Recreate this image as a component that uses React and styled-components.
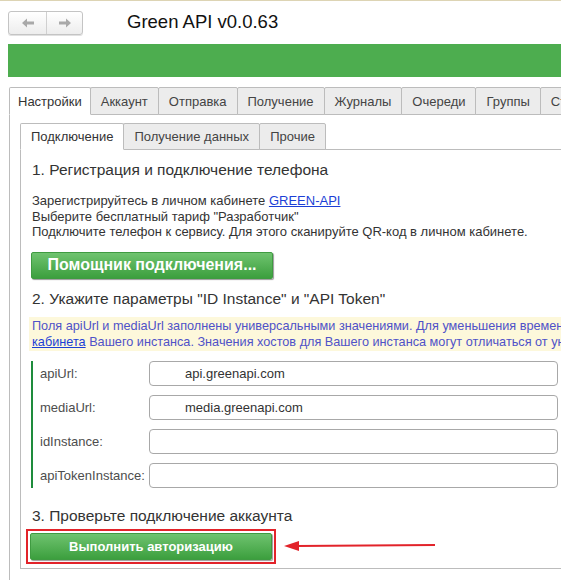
import React from "react";
import styled, { createGlobalStyle } from "styled-components";

const Global = createGlobalStyle`
  html, body { margin: 0; padding: 0; background: #fff; overflow: hidden; }
  body { font-family: "Liberation Sans", Arial, sans-serif; color: #333; }
`;

const Page = styled.div`
  width: 561px;
  height: 580px;
  overflow: hidden;
  border-top: 1px solid #ddd4b4;
  box-sizing: border-box;
  padding-left: 8px;
`;

const Header = styled.div`
  display: flex;
  align-items: center;
  height: 43px;
`;

const NavGroup = styled.div`
  display: flex;
  height: 24px;
  border: 1px solid #c4c4c4;
  border-radius: 3px;
  background: linear-gradient(#ffffff, #ededed);
  box-sizing: border-box;
  box-shadow: 0 1px 0 #e0e0e0;
`;

const NavButton = styled.div`
  width: ${(p) => p.w}px;
  display: flex;
  align-items: center;
  justify-content: center;
  & + & { border-left: 1px solid #d0d0d0; }
`;

const Title = styled.div`
  margin-left: 44px;
  margin-top: -2px;
  font-size: 18.5px;
  color: #111;
`;

const GreenBar = styled.div`
  height: 33px;
  background: #4dad4f;
`;

const TabRow = styled.div`
  display: flex;
  margin-top: 10px;
  margin-left: ${(p) => p.ml || 0}px;
  height: ${(p) => p.h}px;
  white-space: nowrap;
`;

const Tab = styled.div`
  display: flex;
  align-items: center;
  box-sizing: border-box;
  padding: 0 ${(p) => p.px}px;
  font-size: ${(p) => p.fs}px;
  color: ${(p) => (p.active ? "#333" : "#444")};
  background: ${(p) => (p.active ? "#fff" : "#ececec")};
  border: 1px solid #bcbcbc;
  border-bottom: ${(p) => (p.active ? "1px solid #fff" : "1px solid #bcbcbc")};
  border-radius: 2px 2px 0 0;
  margin-right: -1px;
  position: relative;
  z-index: ${(p) => (p.active ? 2 : 1)};
  height: 100%;
  flex-shrink: 0;
`;

const OuterPanel = styled.div`
  margin-left: 1px;
  margin-top: -1px;
  width: 700px;
  height: 600px;
  border-left: 1px solid #bcbcbc;
  border-top: 1px solid #bcbcbc;
  padding-left: 10px;
  padding-top: 8px;
  box-sizing: border-box;
`;

const InnerTabs = styled(TabRow)`
  margin-top: 0;
`;

const InnerPanel = styled.div`
  margin-top: -1px;
  width: 700px;
  border: 1px solid #bcbcbc;
  border-right: none;
  padding: 10px 0 4px 11px;
  box-sizing: border-box;
`;

const Heading = styled.div`
  font-size: 15.5px;
  color: #333;
  line-height: 20px;
  margin-bottom: ${(p) => p.mb || 0}px;
`;

const Text = styled.div`
  font-size: 13px;
  line-height: 15.5px;
  color: #333;
  white-space: nowrap;
`;

const Link = styled.a`
  color: #1c3fd6;
  text-decoration: underline;
  cursor: pointer;
`;

const GreenButton = styled.button`
  display: flex;
  align-items: center;
  justify-content: center;
  width: 242px;
  height: 27px;
  margin-left: ${(p) => p.ml || 0}px;
  border: 1px solid #3f9b41;
  border-radius: 2px;
  background: linear-gradient(#6fc36f, #3c9f3e);
  color: #fff;
  font-family: "Liberation Sans", Arial, sans-serif;
  font-weight: bold;
  font-size: ${(p) => p.fs}px;
  box-shadow: 1px 1px 1px #9a9a9a;
  padding: 0;
  cursor: pointer;
`;

const InfoBox = styled.div`
  margin: 8px 0 10px -3px;
  padding: 1px 0 1px 3px;
  background: #fdf8db;
  color: #4f52c8;
  font-size: 12.7px;
  line-height: 16px;
  white-space: nowrap;
`;

const InfoLink = styled.a`
  color: #1c3fd6;
  text-decoration: underline;
`;

const Form = styled.div`
  border-left: 2px solid #1e8c3c;
  padding-left: 7px;
  display: flex;
  flex-direction: column;
  gap: 9px;
  margin-left: -1px;
`;

const FieldRow = styled.div`
  display: flex;
  align-items: center;
  height: 25px;
`;

const Label = styled.div`
  width: 109px;
  font-size: 13px;
  color: #4d4d4d;
`;

const Input = styled.div`
  width: 409px;
  height: 25px;
  box-sizing: border-box;
  border: 1px solid #a8a8a8;
  border-radius: 4px;
  padding-left: 35px;
  display: flex;
  align-items: center;
  font-size: 13px;
  color: #333;
`;

const ActionRow = styled.div`
  display: flex;
  align-items: center;
  margin-top: 3px;
  margin-left: -6px;
`;

const Highlight = styled.div`
  border: 2px solid #e2232a;
  padding: 2px;
`;

const Spacer = styled.div`
  height: ${(p) => p.h}px;
`;

const NavArrow = ({ dir }) => (
  <svg width="12" height="10" viewBox="0 0 12 10">
    {dir === "left" ? (
      <path d="M0 5 L5 0.5 L5 3.5 L12 3.5 L12 6.5 L5 6.5 L5 9.5 Z" fill="#a9a9a9" />
    ) : (
      <path d="M12 5 L7 0.5 L7 3.5 L0 3.5 L0 6.5 L7 6.5 L7 9.5 Z" fill="#a9a9a9" />
    )}
  </svg>
);

const RedArrow = () => (
  <svg width="152" height="12" viewBox="0 0 152 12" style={{ marginLeft: 8 }}>
    <line x1="12" y1="6" x2="151" y2="5" stroke="#e2232a" strokeWidth="2" />
    <path d="M0 6 L15 1 L15 11 Z" fill="#e2232a" />
  </svg>
);

const outerTabs = [
  ["Настройки", true, 8],
  ["Аккаунт", false, 10],
  ["Отправка", false, 10],
  ["Получение", false, 10],
  ["Журналы", false, 10],
  ["Очереди", false, 10],
  ["Группы", false, 10],
  ["Статусы", false, 10],
];

const innerTabs = [["Подключение", true], ["Получение данных"], ["Прочие"]];

const fields = [
  ["apiUrl:", "api.greenapi.com"],
  ["mediaUrl:", "media.greenapi.com"],
  ["idInstance:", ""],
  ["apiTokenInstance:", ""],
];

export default function App() {
  return (
    <>
      <Global />
      <Page>
        <Header>
          <NavGroup>
            <NavButton w={37}>
              <NavArrow dir="left" />
            </NavButton>
            <NavButton w={35}>
              <NavArrow dir="right" />
            </NavButton>
          </NavGroup>
          <Title>Green API v0.0.63</Title>
        </Header>
        <GreenBar />
        <TabRow h={28} ml={1}>
          {outerTabs.map(([t, a, px]) => (
            <Tab key={t} active={a} px={px} fs={13}>
              {t}
            </Tab>
          ))}
        </TabRow>
        <OuterPanel>
          <InnerTabs h={27}>
            {innerTabs.map(([t, a]) => (
              <Tab key={t} active={a} px={10} fs={13}>
                {t}
              </Tab>
            ))}
          </InnerTabs>
          <InnerPanel>
            <Heading mb={13}>1. Регистрация и подключение телефона</Heading>
            <Text>
              Зарегистрируйтесь в личном кабинете <Link>GREEN-API</Link>
            </Text>
            <Text>Выберите бесплатный тариф "Разработчик"</Text>
            <Text>
              Подключите телефон к сервису. Для этого сканируйте QR-код в личном кабинете.
            </Text>
            <Spacer h={12} />
            <GreenButton fs={16} ml={-1}>
              Помощник подключения...
            </GreenButton>
            <Spacer h={10} />
            <Heading>2. Укажите параметры "ID Instance" и "API Token"</Heading>
            <InfoBox>
              Поля apiUrl и mediaUrl заполнены универсальными значениями. Для уменьшения времени ответа рекомендуется указать хосты из личного
              <br />
              <InfoLink>кабинета</InfoLink> Вашего инстанса. Значения хостов для Вашего инстанса могут отличаться от универсальных.
            </InfoBox>
            <Form>
              {fields.map(([l, v]) => (
                <FieldRow key={l}>
                  <Label>{l}</Label>
                  <Input>{v}</Input>
                </FieldRow>
              ))}
            </Form>
            <Spacer h={18} />
            <Heading>3. Проверьте подключение аккаунта</Heading>
            <ActionRow>
              <Highlight>
                <GreenButton fs={13}>Выполнить авторизацию</GreenButton>
              </Highlight>
              <RedArrow />
            </ActionRow>
          </InnerPanel>
        </OuterPanel>
      </Page>
    </>
  );
}
